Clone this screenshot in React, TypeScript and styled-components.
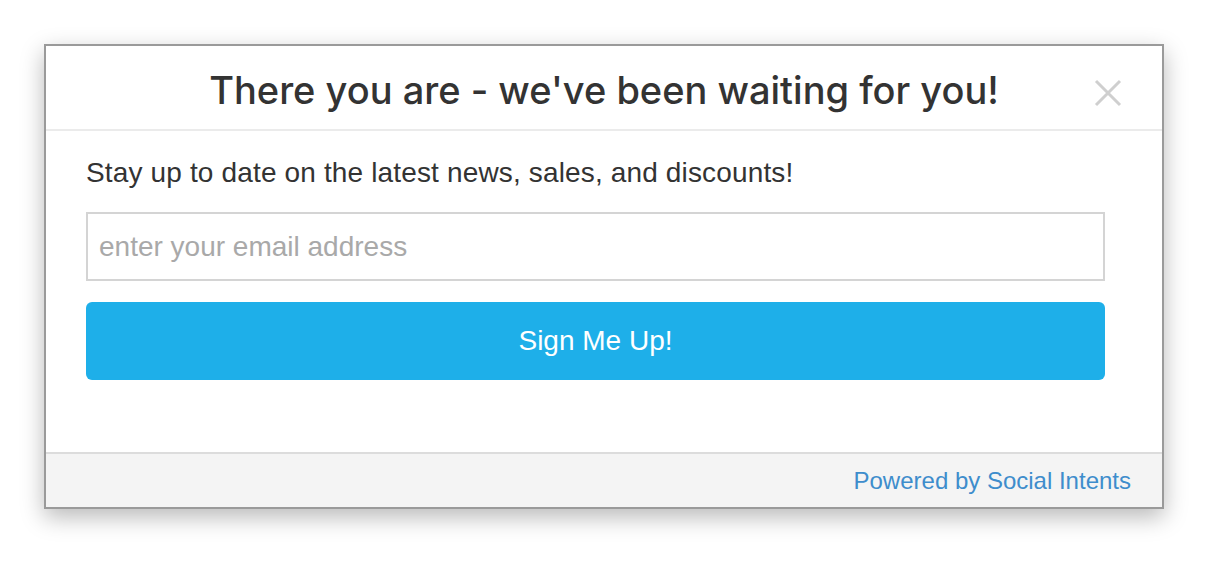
import React from 'react'
import styled, { createGlobalStyle } from 'styled-components';

const GlobalStyle = createGlobalStyle`
body {
  margin: 0;
  background: #fff;
  font-family: "Liberation Sans", Arial, sans-serif;
}
`;

const Page = styled.div`
padding: 44px;
`;

const Modal = styled.div`
width: 1116px;
border: 2px solid #9a9a9a;
background: #fff;
box-shadow: 0 8px 22px rgba(0, 0, 0, 0.28);
`;

const Header = styled.div`
position: relative;
height: 83px;
display: flex;
align-items: center;
justify-content: center;
border-bottom: 2px solid #ebebeb;
`;

const Title = styled.h2`
margin: 4px 0 0 0;
font-family: Inter, "Liberation Sans", sans-serif;
font-size: 38px;
font-weight: 500;
color: #333;
`;

const Close = styled.button`
position: absolute;
right: 40px;
top: 33px;
width: 28px;
height: 28px;
padding: 0;
border: none;
background: none;
cursor: pointer;
`;

const Body = styled.div`
padding: 26px 57px 72px 40px;
display: flex;
flex-direction: column;
`;

const Intro = styled.p`
margin: 0 0 23px 0;
font-size: 28px;
color: #333;
line-height: 32px;
letter-spacing: 0.15px;
`;

const EmailInput = styled.input`
box-sizing: border-box;
height: 69px;
border: 2px solid #d4d4d4;
padding: 0 11px;
font-family: inherit;
font-size: 28px;
color: #333;
outline: none;

&::placeholder {
  color: #a9a9a9;
}
`;

const Button = styled.button`
margin: 21px 0 0 0;
height: 78px;
border: none;
border-radius: 6px;
background: #1eafe9;
color: #fff;
font-family: inherit;
font-size: 28px;
cursor: pointer;
`;

const Footer = styled.div`
height: 53px;
border-top: 2px solid #dcdcdc;
background: #f4f4f4;
display: flex;
align-items: center;
justify-content: flex-end;
padding: 0 31px;
`;

const Powered = styled.a`
font-size: 24px;
color: #3e8dcc;
text-decoration: none;
`;

export default function App() {
  return (
    <Page>
      <GlobalStyle />
      <Modal>
        <Header>
          <Title>There you are - we've been waiting for you!</Title>
          <Close aria-label="close">
            <svg width="28" height="28" viewBox="0 0 28 28">
              <path d="M2 2 L26 26 M26 2 L2 26" stroke="#cfcfcf" strokeWidth="3" />
            </svg>
          </Close>
        </Header>
        <Body>
          <Intro>Stay up to date on the latest news, sales, and discounts!</Intro>
          <EmailInput placeholder="enter your email address" />
          <Button>Sign Me Up!</Button>
        </Body>
        <Footer>
          <Powered href="#">Powered by Social Intents</Powered>
        </Footer>
      </Modal>
    </Page>
  )
}
